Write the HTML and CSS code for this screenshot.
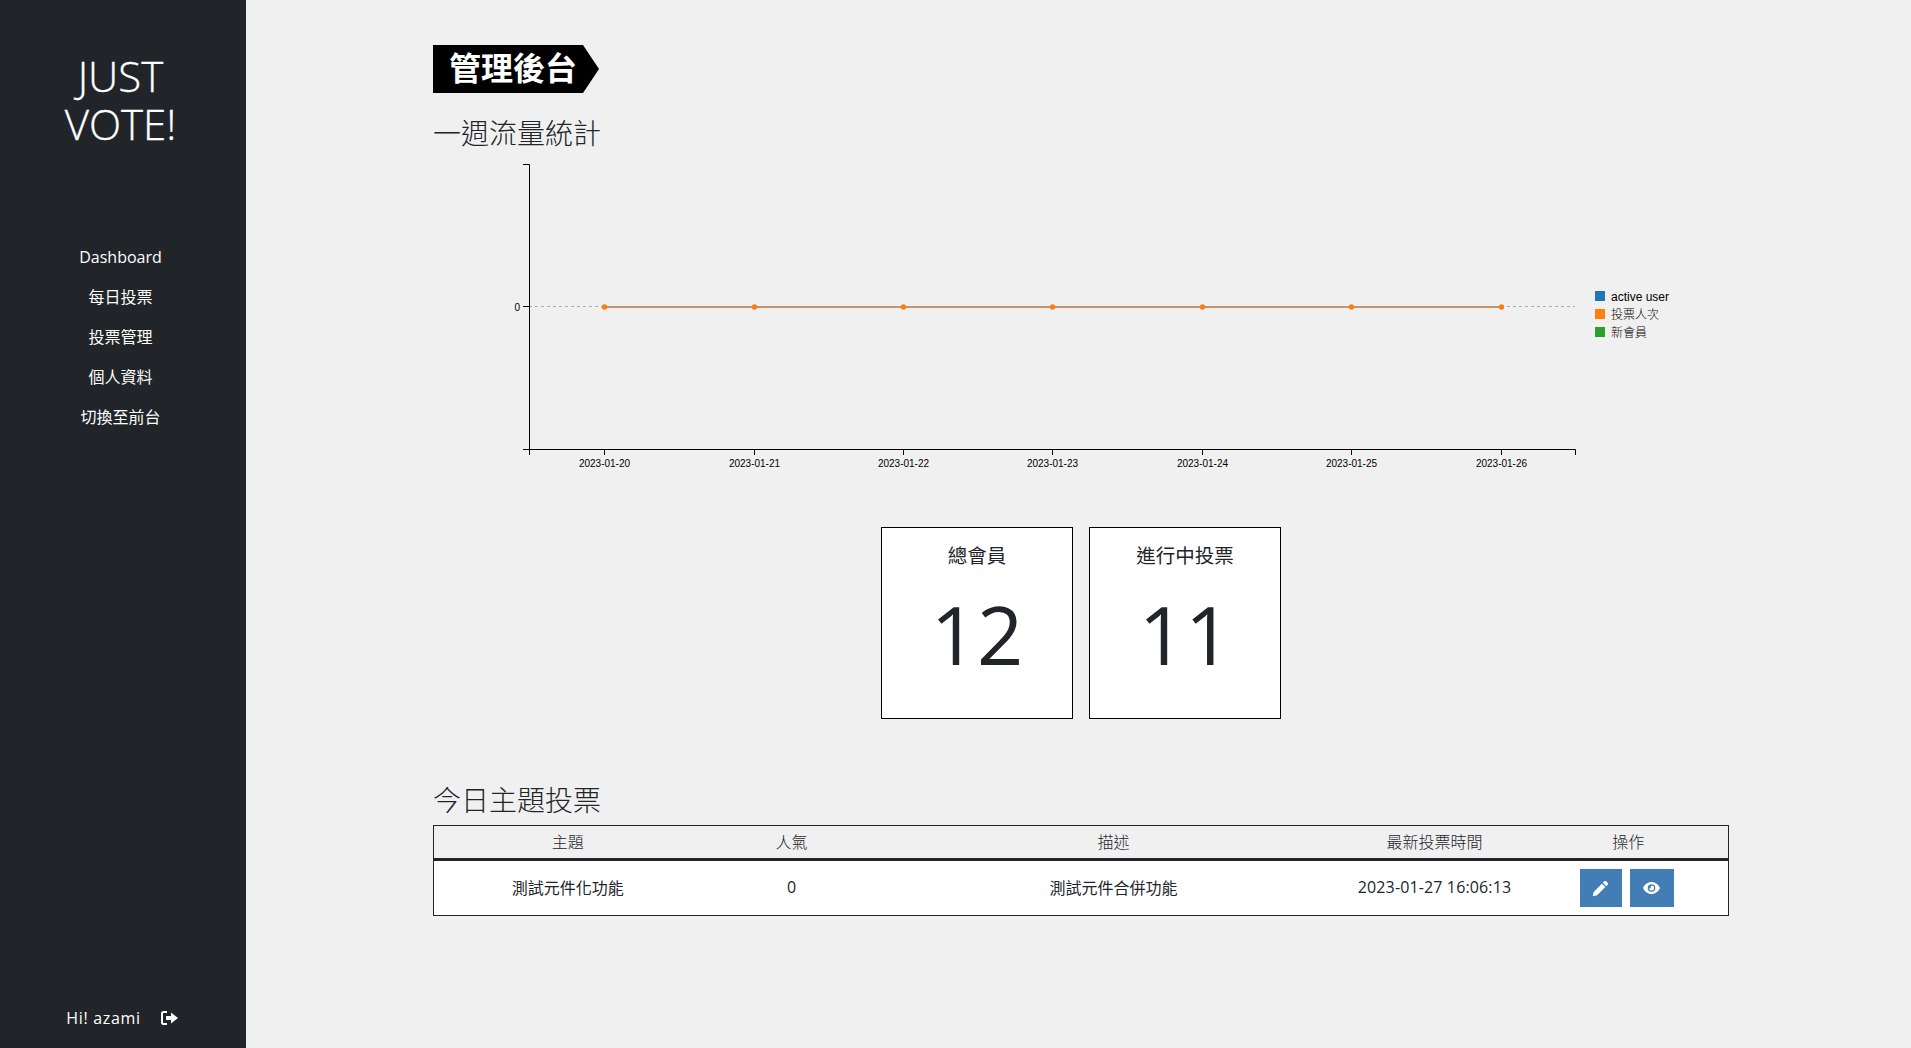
FILE: index.html
```html
<!DOCTYPE html>
<html lang="zh-Hant">
<head>
  <meta charset="UTF-8">
  <title>JUST VOTE! 管理後台</title>
  <link rel="stylesheet" href="styles.css">
</head>
<body>

<aside class="sidebar">
  <div class="logo">JUST<br>VOTE!</div>
  <nav class="side-nav">
    <a href="#">Dashboard</a>
    <a href="#">每日投票</a>
    <a href="#">投票管理</a>
    <a href="#">個人資料</a>
    <a href="#">切換至前台</a>
  </nav>
  <div class="side-user">
    <span>Hi! azami</span>
    <svg class="logout" viewBox="0 0 18 14" width="18" height="14">
      <path d="M6 1H2.500C1.600 1 1 1.600 1 2.500v9c0 .9.6 1.500 1.500 1.500H6" fill="none" stroke="#fff" stroke-width="2"/>
      <path d="M5 5h5V1.500L17 7l-7 5.500V9H5z" fill="#fff"/>
    </svg>
  </div>
</aside>

<main class="content">
  <h1 class="banner">管理後台</h1>
  <h2 class="sub-title">一週流量統計</h2>

  <svg class="chart" width="1296" height="320" viewBox="0 0 1296 320">
    <line class="grid-line" x1="96" y1="153.500" x2="1142" y2="153.500"/>
    <path class="axis" d="M90 11.500h6.500V296.500H90"/>
    <path class="axis" d="M96.500 302V296.500H1142.500V302"/>
    <path class="axis" d="M171.500 296.500V302M321.500 296.500V302M470.500 296.500V302M619.500 296.500V302M769.500 296.500V302M918.500 296.500V302M1068.500 296.500V302"/>
    <path class="axis" d="M90 153.500h6"/>
    <text class="tick" x="87" y="158" text-anchor="end">0</text>
    <g class="tick" text-anchor="middle">
      <text x="171.500" y="313.500">2023-01-20</text>
      <text x="321.500" y="313.500">2023-01-21</text>
      <text x="470.500" y="313.500">2023-01-22</text>
      <text x="619.500" y="313.500">2023-01-23</text>
      <text x="769.500" y="313.500">2023-01-24</text>
      <text x="918.500" y="313.500">2023-01-25</text>
      <text x="1068.500" y="313.500">2023-01-26</text>
    </g>
    <line class="data-line" x1="171.500" y1="154" x2="1068.500" y2="154"/>
    <g class="dots">
      <circle cx="171.500" cy="154" r="2.700"/>
      <circle cx="321.500" cy="154" r="2.700"/>
      <circle cx="470.500" cy="154" r="2.700"/>
      <circle cx="619.500" cy="154" r="2.700"/>
      <circle cx="769.500" cy="154" r="2.700"/>
      <circle cx="918.500" cy="154" r="2.700"/>
      <circle cx="1068.500" cy="154" r="2.700"/>
    </g>
    <rect x="1162" y="138" width="10" height="10" fill="#1f77b4"/>
    <rect x="1162" y="156" width="10" height="10" fill="#ff7f0e"/>
    <rect x="1162" y="174" width="10" height="10" fill="#2ca02c"/>
    <g class="legend">
      <text x="1178" y="148">active user</text>
      <text x="1178" y="166">投票人次</text>
      <text x="1178" y="184">新會員</text>
    </g>
  </svg>

  <div class="stats">
    <div class="stat-card">
      <h3>總會員</h3>
      <div class="stat-num">12</div>
    </div>
    <div class="stat-card">
      <h3>進行中投票</h3>
      <div class="stat-num">11</div>
    </div>
  </div>

  <h2 class="sub-title today">今日主題投票</h2>
  <table class="vote-table">
    <thead>
      <tr>
        <th class="col-topic">主題</th>
        <th class="col-pop">人氣</th>
        <th class="col-desc">描述</th>
        <th class="col-time">最新投票時間</th>
        <th class="col-act">操作</th>
      </tr>
    </thead>
    <tbody>
      <tr>
        <td>測試元件化功能</td>
        <td>0</td>
        <td>測試元件合併功能</td>
        <td class="time">2023-01-27 16:06:13</td>
        <td class="actions">
          <button class="btn btn-edit" type="button">
            <svg viewBox="0 0 16 16" width="17" height="17"><path d="M11.600 1.200c.5-.5 1.200-.5 1.700 0l1.500 1.500c.5.5.5 1.200 0 1.700l-1.400 1.400-3.200-3.200zM9.300 3.500l3.200 3.200-7.700 7.700L.6 15.400l1-4.200z" fill="#fff"/></svg>
          </button>
          <button class="btn btn-view" type="button">
            <svg viewBox="0 0 18 14" width="19" height="14"><path fill-rule="evenodd" d="M9 1c3.800 0 6.900 2.500 8.500 6-1.600 3.500-4.700 6-8.500 6S2.100 10.500.5 7C2.100 3.500 5.200 1 9 1zm0 2.200A3.800 3.800 0 1 0 9 10.800 3.800 3.800 0 0 0 9 3.200zM9 4.500a2.500 2.500 0 1 1-2.500 2.500c0 .5.500.6 1 .4.600-.2.900-.6.800-1.200-.1-.5-.1-1.700.7-1.700z" fill="#fff"/></svg>
          </button>
        </td>
      </tr>
    </tbody>
  </table>
</main>

</body>
</html>
```

FILE: styles.css
```css
* {
  box-sizing: border-box;
}
body {
  margin: 0;
  height: 100vh;
  overflow: hidden;
  display: flex;
  background: #f0f0f0;
  color: #212529;
  font-family: "Open Sans", "Noto Sans CJK TC", sans-serif;
  font-size: 16px;
}

/* sidebar */
.sidebar {
  width: 246px;
  flex: none;
  display: flex;
  flex-direction: column;
  align-items: center;
  background: #212529;
  color: #fff;
  padding: 52px 5px 0 0;
}
.logo {
  font-size: 42px;
  font-weight: 300;
  line-height: 48px;
  text-align: center;
  -webkit-text-stroke: 0.3px #fff;
}
.side-nav {
  display: flex;
  flex-direction: column;
  align-items: center;
  margin-top: 89px;
}
.side-nav a {
  height: 40px;
  line-height: 40px;
  color: #fff;
  text-decoration: none;
}
.side-user {
  margin: auto 0 19px 4px;
  display: flex;
  align-items: center;
  gap: 20px;
  letter-spacing: 0.7px;
}
.logout {
  display: block;
}

/* main */
.content {
  flex: 1;
  padding: 45px 0 0 187px;
}
.banner {
  width: 166px;
  height: 48px;
  margin: 0;
  padding-left: 16px;
  background: #000;
  color: #fff;
  font-size: 32px;
  font-weight: 700;
  line-height: 46px;
  clip-path: polygon(0 0, 150px 0, 100% 50%, 150px 100%, 0 100%);
}
.sub-title {
  margin: 19px 0 0;
  font-size: 28px;
  font-weight: 300;
  line-height: 42px;
  color: #212529;
}
.chart {
  display: block;
  margin-top: -1px;
}
.axis {
  fill: none;
  stroke: #000;
  stroke-width: 1;
}
.grid-line {
  stroke: #aaa;
  stroke-dasharray: 3 3;
}
.data-line {
  stroke: #c4946a;
  stroke-width: 2;
}
.dots circle {
  fill: #ff7f0e;
}
.tick {
  font-family: "Liberation Sans", "Noto Sans CJK TC", sans-serif;
  font-size: 10px;
  fill: #000;
}
.legend text {
  font-family: "Liberation Sans", "Noto Sans CJK TC", sans-serif;
  font-size: 12px;
  font-weight: 300;
  fill: #000;
}

.stats {
  display: flex;
  justify-content: center;
  gap: 16px;
  margin-top: 54px;
  width: 1296px;
}
.stat-card {
  width: 192px;
  height: 192px;
  background: #fff;
  border: 1px solid #000;
  text-align: center;
}
.stat-card h3 {
  margin: 14px 0 0;
  font-size: 19.500px;
  font-weight: 400;
  line-height: 27px;
}
.stat-num {
  font-size: 81px;
  font-weight: 400;
  line-height: 96px;
  margin-top: 17px;
}

.today {
  margin-top: 60px;
}
.vote-table {
  width: 1296px;
  margin-top: 4px;
  border-collapse: collapse;
  border: 1px solid #212529;
  table-layout: fixed;
  text-align: center;
}
.vote-table th {
  height: 34px;
  padding: 0 0 2px;
  font-weight: 300;
  border-bottom: 3px solid #212529;
}
.vote-table td {
  height: 56px;
  padding: 0 0 2px;
  background: #fff;
}
.vote-table .time {
  letter-spacing: 0.13px;
}
.col-topic { width: 268px; }
.col-pop { width: 180px; }
.col-desc { width: 464px; }
.col-time { width: 178px; }
.vote-table .col-act { padding-left: 5px; }
.vote-table .actions {
  padding: 0;
  text-align: left;
}
.btn {
  height: 38px;
  border: 0;
  padding: 0;
  background: #437db5;
  display: inline-flex;
  align-items: center;
  justify-content: center;
  vertical-align: middle;
}
.btn-edit {
  width: 42px;
  margin-left: 56px;
}
.btn-view {
  width: 44px;
  margin-left: 4px;
}
```
